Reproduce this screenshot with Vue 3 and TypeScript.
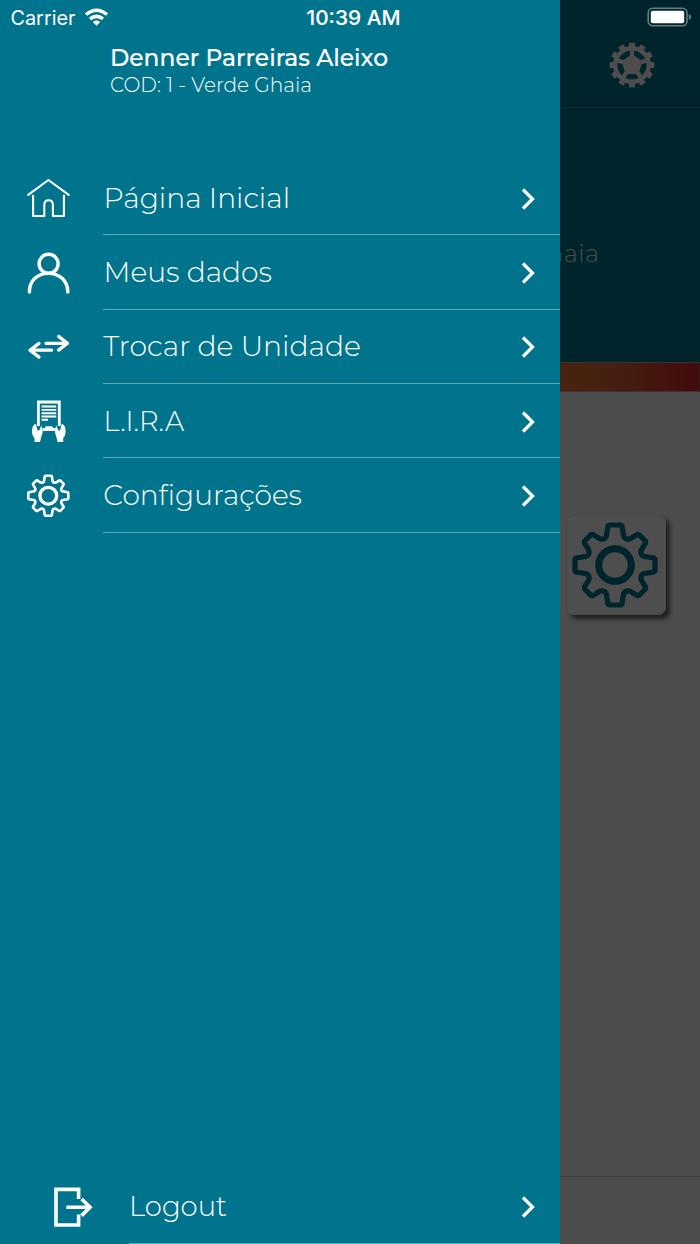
<script setup lang="ts">
interface MenuItem {
  label: string
  icon: 'home' | 'user' | 'swap' | 'reader' | 'gear'
  x: number
  width: number
}

const items: MenuItem[] = [
  { label: 'Página Inicial', icon: 'home', x: 0.5, width: 186.5 },
  { label: 'Meus dados', icon: 'user', x: 0.5, width: 168.5 },
  { label: 'Trocar de Unidade', icon: 'swap', x: 0.3, width: 257.5 },
  { label: 'L.I.R.A', icon: 'reader', x: 0.5, width: 80.5 },
  { label: 'Configurações', icon: 'gear', x: 0.3, width: 198.7 },
]

const quarters = [0, 90, 180, 270]
const teeth = Array.from({ length: 12 }, (_, i) => i * 30)
const gearPath = (() => {
  const pts: [number, number][] = [
    [-7, -39], [-6, -40], [6, -40], [7, -39], [8.6, -29], [9.4, -27.3], [11, -26.2],
    [13.2, -25.8], [15.2, -26.3], [22.2, -30.6], [24, -30.4], [30.4, -24], [30.6, -22.2],
    [26.3, -15.2], [25.8, -13.2], [26.2, -11], [27.3, -9.4], [29, -8.6],
  ]
  const out: string[] = []
  for (const q of quarters) {
    const c = Math.round(Math.cos((q * Math.PI) / 180))
    const s = Math.round(Math.sin((q * Math.PI) / 180))
    for (const [x, y] of pts) out.push(`${x * c - y * s},${x * s + y * c}`)
  }
  return `M${out.join('L')}Z`
})()
</script>

<template>
  <div class="screen">
    <main class="page">
      <header class="topbar">
        <svg class="cog" viewBox="-23 -23 46 46">
          <rect v-for="a in teeth" :key="a" x="-3" y="-22.3" width="6" height="6" :transform="`rotate(${a})`" />
          <circle r="16.8" class="cog-ring" />
          <path d="M0,-11L10.5,-3.4L6.5,8.9L-6.5,8.9L-10.5,-3.4Z" />
          <rect v-for="a in [0, 72, 144, 216, 288]" :key="'r' + a" x="-2.2" y="-16" width="4.4" height="10" :transform="`rotate(${a})`" />
        </svg>
      </header>
      <section class="hero">
        <svg class="unit" width="140" height="40"><text x="39.5" y="29" text-anchor="end">Verde Ghaia</text></svg>
      </section>
      <div class="stripe"></div>
      <section class="content">
        <div class="card">
          <svg viewBox="-50 -50 100 100">
            <path class="gear-line" :d="gearPath" />
            <circle class="gear-hub" r="16.3" />
          </svg>
        </div>
      </section>
      <footer class="tabs"></footer>
    </main>

    <aside class="drawer">
      <div class="profile">
        <svg width="320" height="60">
          <text class="name" x="0" y="22" textLength="278" lengthAdjust="spacingAndGlyphs">Denner Parreiras Aleixo</text>
          <text class="code" x="0" y="47.7" textLength="202" lengthAdjust="spacingAndGlyphs">COD: 1 - Verde Ghaia</text>
        </svg>
      </div>
      <nav class="menu">
        <a v-for="item in items" :key="item.label" class="row">
          <svg class="icon" viewBox="0 0 48 48">
            <g v-if="item.icon === 'home'" class="thin">
              <path d="M4.2,20.8L24.4,6L44.7,20.8" />
              <path d="M9.1,21.8V42H20.3V31Q20.3,26.3 24.6,26.3Q28.9,26.3 28.9,31V42H39.9V21.8" />
            </g>
            <g v-else-if="item.icon === 'user'" class="bold">
              <circle cx="24.6" cy="14.8" r="9.5" />
              <path d="M5.4,43C5.4,32 13,24.4 24.4,24.4S43.8,32 43.8,43" />
            </g>
            <g v-else-if="item.icon === 'swap'" class="swap">
              <path d="M22,20.3H43.6M34.6,13.4L43.4,20.3L34.6,27.1M27.5,27.2H6M15,20.4L6,27.2L15,34.1" />
            </g>
            <g v-else-if="item.icon === 'reader'" class="solid">
              <path class="frame" d="M14.4,29V5H35.3V29" />
              <path class="text-lines" d="M17.6,9.5H32.2M17.6,12.9H32.2M17.6,16.2H32.2M17.6,19.5H32.2M17.6,22.8H24" />
              <path d="M18.6,31H20.8L21.7,29.2H28.2L29.2,31H31.2V34H18.6Z" />
              <path d="M11.8,26.8Q8,28 8,34Q8,39 10.5,41V45H16L17.5,39Q20,34 17.3,28.5L15.2,33.6H13.6Z" />
              <path d="M37.8,26.8Q41.6,28 41.6,34Q41.6,39 39.2,41V45H33.6L32.1,39Q29.6,34 32.3,28.5L34.4,33.6H36Z" />
            </g>
            <g v-else transform="translate(24.3 23.7) scale(.5)">
              <path class="gear-line" :d="gearPath" />
              <circle class="gear-hub" r="16.8" />
            </g>
          </svg>
          <span class="cell">
            <svg class="label" width="330" height="50">
              <text :x="item.x" y="34.3" :textLength="item.width" lengthAdjust="spacingAndGlyphs">{{ item.label }}</text>
            </svg>
            <svg class="chevron" viewBox="0 0 16 24"><path d="M3,2.5L12.5,12L3,21.5" /></svg>
          </span>
        </a>
      </nav>
      <a class="row logout">
        <svg class="icon" viewBox="0 0 48 48">
          <path class="exit" d="M29.6,16V6.4H7V42H29.6V31.6M17.4,24.3H42M32.6,16L41,24.3L32.6,32.6" />
        </svg>
        <span class="cell">
          <svg class="label" width="330" height="50">
            <text x="0" y="34.3" textLength="98" lengthAdjust="spacingAndGlyphs">Logout</text>
          </svg>
          <svg class="chevron" viewBox="0 0 16 24"><path d="M3,2.5L12.5,12L3,21.5" /></svg>
        </span>
      </a>
    </aside>

    <div class="status">
      <svg width="700" height="34">
        <text x="10.5" y="25" textLength="65" lengthAdjust="spacingAndGlyphs">Carrier</text>
        <g class="wifi">
          <path d="M86,14.5Q96.5,6 107,14.5" />
          <path d="M90,18.9Q96.5,13.8 103,18.9" />
          <path class="wifi-dot" d="M92.8,22Q96.5,19.2 100.2,22L96.5,25.8Z" />
        </g>
        <text class="clock" x="306.5" y="25" textLength="94" lengthAdjust="spacingAndGlyphs">10:39 AM</text>
        <rect class="shell" x="648.2" y="8.2" width="38.8" height="17.6" rx="4.5" />
        <rect class="charge" x="650.8" y="10.8" width="33.4" height="12.4" rx="2" />
        <path class="nub" d="M688.8,13.8Q691.2,15 691.2,17T688.8,20.2Z" />
      </svg>
    </div>
  </div>
</template>

<style>
html, body { margin: 0; background: #4d4d4d; }
</style>

<style scoped>
.screen { position: relative; width: 700px; height: 1244px; overflow: hidden; background: #4d4d4d; font-family: Montserrat, Inter, "Open Sans", sans-serif; }
svg { display: block; flex: none; }
.page { display: flex; flex-direction: column; height: 100%; }
.topbar { box-sizing: border-box; height: 108px; padding: 41.5px 45.5px 0 0; display: flex; justify-content: flex-end; background: #00242b; border-bottom: 1px solid #17292e; }
.cog { width: 46px; height: 46px; fill: #4d4d4d; }
.cog-ring { fill: none; stroke: #4d4d4d; stroke-width: 4.4; }
.hero { box-sizing: border-box; height: 254px; padding-top: 125px; background: #00242b; display: flex; justify-content: flex-end; }
.unit { overflow: visible; }
.unit text { font-size: 24px; font-weight: 300; letter-spacing: .5px; fill: #4d4d4d; }
.stripe { box-sizing: border-box; height: 30px; border: solid #343536; border-width: 1px 2px 1px 0; border-right-color: #3d1414; background: linear-gradient(90deg, #48240f 80%, #451d10 90%, #430c0c 99%); }
.content { flex: 1; display: flex; justify-content: flex-end; align-items: flex-start; padding: 123px 34px 0 0; }
.card { box-sizing: border-box; width: 100px; height: 100px; background: #4e4e4e; border: 1px solid #494949; border-radius: 7px; box-shadow: 4px 4px 4px #202020; }
.card svg { width: 100px; height: 100px; margin: -1.5px 0 0 -1.7px; }
.gear-line, .gear-hub { fill: none; stroke: #00242b; stroke-width: 5.2; stroke-linejoin: round; }
.gear-hub { stroke-width: 7; }
.tabs { box-sizing: border-box; height: 68px; border-top: 1px solid #404040; }
.drawer { position: absolute; inset: 0 140px 0 0; display: flex; flex-direction: column; background: #00748d; color: #fff; }
.profile { height: 117px; padding: 44px 0 0 110px; }
.name { fill: #fff; font-size: 23.5px; font-weight: 500; stroke: #fff; stroke-width: .15px; }
.code { fill: #fff; font-size: 20px; font-weight: 300; }
.menu { display: flex; flex-direction: column; flex: 1; }
.row { display: flex; align-items: center; height: 74.35px; padding-left: 24px; }
.icon { width: 48px; height: 48px; margin-right: 31px; }
.cell { box-sizing: border-box; flex: 1; height: 100%; display: flex; align-items: center; justify-content: space-between; padding: 2px 24px 0 0; border-bottom: 1px solid #66a8b6; }
.label text { fill: #fff; font-size: 28.5px; font-weight: 300; }
.chevron { width: 16px; height: 24px; fill: none; stroke: #fff; stroke-width: 3.3; }
.logout { padding-left: 49px; }
.logout .icon { margin-right: 31.5px; }
.icon path, .icon circle { fill: none; stroke: #fff; }
.thin { stroke-width: 2.1; stroke-linecap: round; stroke-linejoin: round; }
.bold { stroke-width: 3.4; stroke-linecap: round; }
.swap { stroke-width: 3.3; stroke-linecap: round; stroke-linejoin: round; }
.icon .solid path { fill: #fff; stroke: none; }
.icon .solid .frame { fill: none; stroke: #fff; stroke-width: 2.8; }
.icon .solid .text-lines { fill: none; stroke: #fff; stroke-width: 1.9; }
.icon .gear-line { stroke-width: 5.2; }
.icon .gear-hub { stroke-width: 6.6; }
.icon .exit { stroke-width: 3.6; }
.status { position: absolute; inset: 0 0 auto 0; }
.status text { font-family: Inter, sans-serif; font-size: 20px; fill: #fff; }
.status .clock { font-weight: 500; stroke: #fff; stroke-width: .1px; }
.wifi path { fill: none; stroke: #fff; stroke-width: 3.5; }
.wifi .wifi-dot { fill: #fff; stroke: none; }
.shell { fill: none; stroke: #667c80; stroke-width: 1.6; }
.charge { fill: #fff; }
.nub { fill: #667c80; }
</style>
